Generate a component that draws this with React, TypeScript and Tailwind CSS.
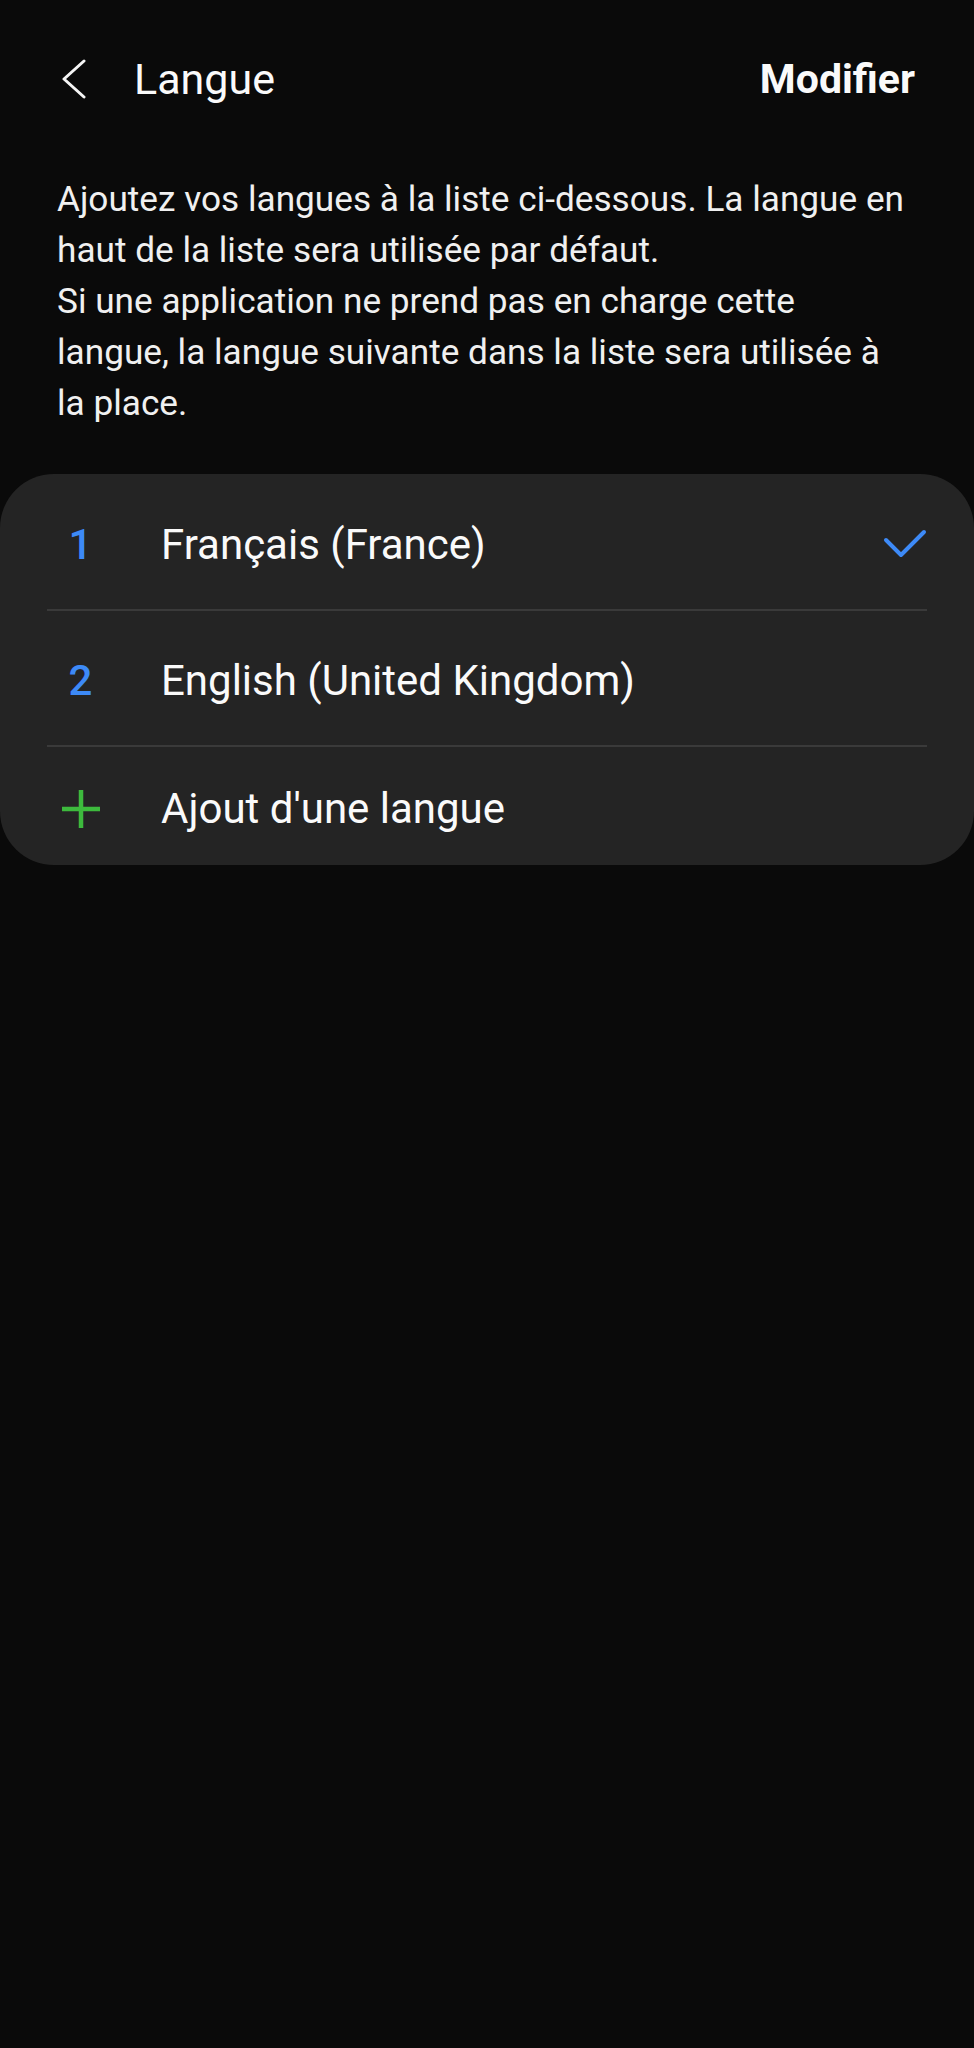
import React from 'react'

const font = { fontFamily: 'Roboto, "Noto Sans", sans-serif' }

function BackIcon() {
  return (
    <svg width="26" height="42" viewBox="0 0 26 42" fill="none">
      <polyline points="23,2 3,20 23,38" stroke="#f5f5f5" strokeWidth="3" strokeLinecap="round" strokeLinejoin="round" />
    </svg>
  )
}

function CheckIcon() {
  return (
    <svg width="44" height="30" viewBox="0 0 44 30" fill="none">
      <polyline points="3,11 18,26 41,3" stroke="#3d8af7" strokeWidth="4" strokeLinecap="round" strokeLinejoin="round" />
    </svg>
  )
}

function PlusIcon() {
  return (
    <svg width="40" height="40" viewBox="0 0 40 40" fill="none">
      <path d="M20 1v38M1 20h38" stroke="#3dba3d" strokeWidth="4.5" />
    </svg>
  )
}

export default function App() {
  return (
    <div className="min-h-[2048px] w-[974px] bg-[#0a0a0a] text-white" style={font}>
      {/* header */}
      <div className="flex h-[159px] items-center justify-between pl-[61px] pr-[59px]">
        <div className="flex items-center">
          <BackIcon />
          <span className="ml-[47px] text-[43px] leading-none text-[#fafafa]">Langue</span>
        </div>
        <button className="text-[41px] font-bold leading-none text-[#fafafa]">Modifier</button>
      </div>

      {/* description */}
      <div className="mt-[15px] pl-[57px] pr-[63px] text-[35.2px] leading-[51px] text-[#f0f0f0]">
        <p>Ajoutez vos langues à la liste ci-dessous. La langue en haut de la liste sera utilisée par défaut.</p>
        <p>Si une application ne prend pas en charge cette langue, la langue suivante dans la liste sera utilisée à la place.</p>
      </div>

      {/* language list */}
      <div className="mt-[45px] rounded-[54px] bg-[#242424]">
        <div className="flex h-[135px] items-center pr-[47px] pt-[5px]">
          <div className="flex w-[161px] justify-center text-[42px] font-medium text-[#3d8af7]">1</div>
          <span className="flex-1 text-[42px] text-[#fafafa]">Français (France)</span>
          <CheckIcon />
        </div>
        <div className="mx-[47px] h-[2px] bg-[#3a3a3a]" />
        <div className="flex h-[134px] items-center pr-[47px] pt-[5px]">
          <div className="flex w-[161px] justify-center text-[42px] font-medium text-[#3d8af7]">2</div>
          <span className="flex-1 text-[42px] text-[#fafafa]">English (United Kingdom)</span>
        </div>
        <div className="mx-[47px] h-[2px] bg-[#3a3a3a]" />
        <div className="flex h-[118px] items-center pr-[47px] pt-[5px]">
          <div className="flex w-[161px] justify-center">
            <PlusIcon />
          </div>
          <span className="flex-1 text-[42px] text-[#fafafa]">Ajout d'une langue</span>
        </div>
      </div>
    </div>
  )
}
